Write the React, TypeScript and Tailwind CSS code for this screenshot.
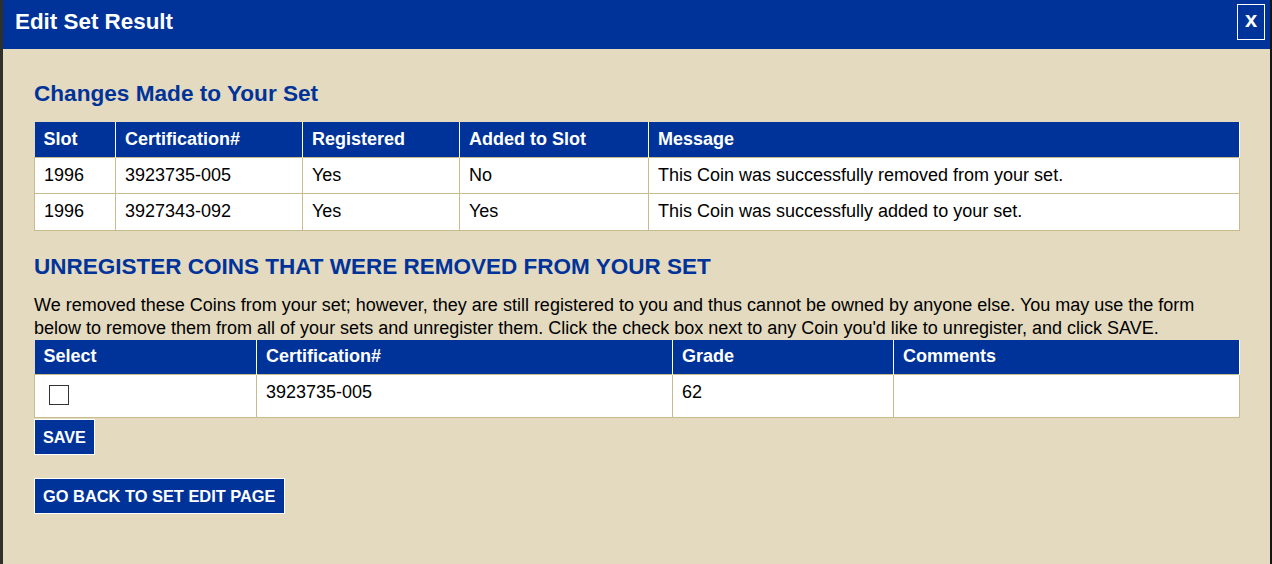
import React from "react";

const BLUE = "bg-[#003399]";

export default function App() {
  const rows1 = [
    ["1996", "3923735-005", "Yes", "No", "This Coin was successfully removed from your set."],
    ["1996", "3927343-092", "Yes", "Yes", "This Coin was successfully added to your set."],
  ];
  return (
    <div
      className="flex h-[564px] w-[1272px] overflow-hidden"
      style={{ fontFamily: '"Liberation Sans", Arial, sans-serif' }}
    >
      <div className="w-[3px] shrink-0 bg-[#2f2f2b]" />
      <div className="flex flex-1 flex-col bg-[#e3dac0]">
        <div className={`flex h-[49px] shrink-0 items-start justify-between ${BLUE} pl-[12px] pr-[5px]`}>
          <div className="pt-[9px] text-[22.4px] font-bold leading-[26px] text-white">Edit Set Result</div>
          <div className="mt-[4px] flex h-[36px] w-[28px] items-center justify-center border border-white text-[22px] font-bold leading-none text-white">
            <span className="-mt-[4px]">x</span>
          </div>
        </div>
        <div className="flex flex-1 flex-col pl-[31px] pr-[30px]">
          <h1 className="mt-[32px] text-[22.6px] font-bold leading-[26px] text-[#003399]">Changes Made to Your Set</h1>
          <table className="mt-[15px] w-full border-collapse text-[18px] leading-[19px] text-black">
            <thead>
              <tr className={`${BLUE} h-[35px]`}>
                <th className="w-[81px] border-r border-white px-[9px] text-left font-bold text-white">Slot</th>
                <th className="w-[187px] border-r border-white px-[9px] text-left font-bold text-white">Certification#</th>
                <th className="w-[157px] border-r border-white px-[9px] text-left font-bold text-white">Registered</th>
                <th className="w-[189px] border-r border-white px-[9px] text-left font-bold text-white">Added to Slot</th>
                <th className="border-r border-white px-[9px] text-left font-bold text-white">Message</th>
              </tr>
            </thead>
            <tbody>
              {rows1.map((r, i) => (
                <tr key={i} className={`bg-white ${i === 0 ? "h-[36px]" : "h-[37px]"}`}>
                  {r.map((c, j) => (
                    <td key={j} className="border border-[#c8bc8c] px-[9px] py-0 align-middle">
                      {c}
                    </td>
                  ))}
                </tr>
              ))}
            </tbody>
          </table>
          <h2 className="mt-[23px] text-[22.5px] font-bold uppercase leading-[26px] text-[#003399]">
            Unregister Coins that were removed from your set
          </h2>
          <p className="mt-[14px] text-[18px] leading-[23px] text-black">
            We removed these Coins from your set; however, they are still registered to you and thus cannot be owned by anyone else. You may use the form below to remove them from all of your sets and unregister them. Click the check box next to any Coin you'd like to unregister, and click SAVE.
          </p>
          <table className="w-full border-collapse text-[18px] leading-[19px] text-black">
            <thead>
              <tr className={`${BLUE} h-[35px]`}>
                <th className="w-[222px] border-r border-white px-[9px] text-left font-bold text-white">Select</th>
                <th className="w-[416px] border-r border-white px-[9px] text-left font-bold text-white">Certification#</th>
                <th className="w-[221px] border-r border-white px-[9px] text-left font-bold text-white">Grade</th>
                <th className="border-r border-white px-[9px] text-left font-bold text-white">Comments</th>
              </tr>
            </thead>
            <tbody>
              <tr className="h-[43px] bg-white">
                <td className="border border-[#c8bc8c] px-[9px] pt-[10px] pb-0 align-top">
                  <div className="ml-[5px] h-[20px] w-[20px] border border-[#333333] bg-white" />
                </td>
                <td className="border border-[#c8bc8c] px-[9px] pt-[8px] align-top">3923735-005</td>
                <td className="border border-[#c8bc8c] px-[9px] pt-[8px] align-top">62</td>
                <td className="border border-[#c8bc8c] px-[9px] pt-[8px] align-top"></td>
              </tr>
            </tbody>
          </table>
          <div className="mt-[1px] flex">
            <button className={`h-[36px] border border-white ${BLUE} px-[8px] text-[16.2px] font-bold text-white`}>SAVE</button>
          </div>
          <div className="mt-[23px] flex">
            <button className={`h-[36px] border border-white ${BLUE} px-[8px] text-[16.4px] font-bold text-white`}>
              GO BACK TO SET EDIT PAGE
            </button>
          </div>
        </div>
      </div>
      <div className="w-[2px] shrink-0 bg-[#151515]" />
    </div>
  );
}
